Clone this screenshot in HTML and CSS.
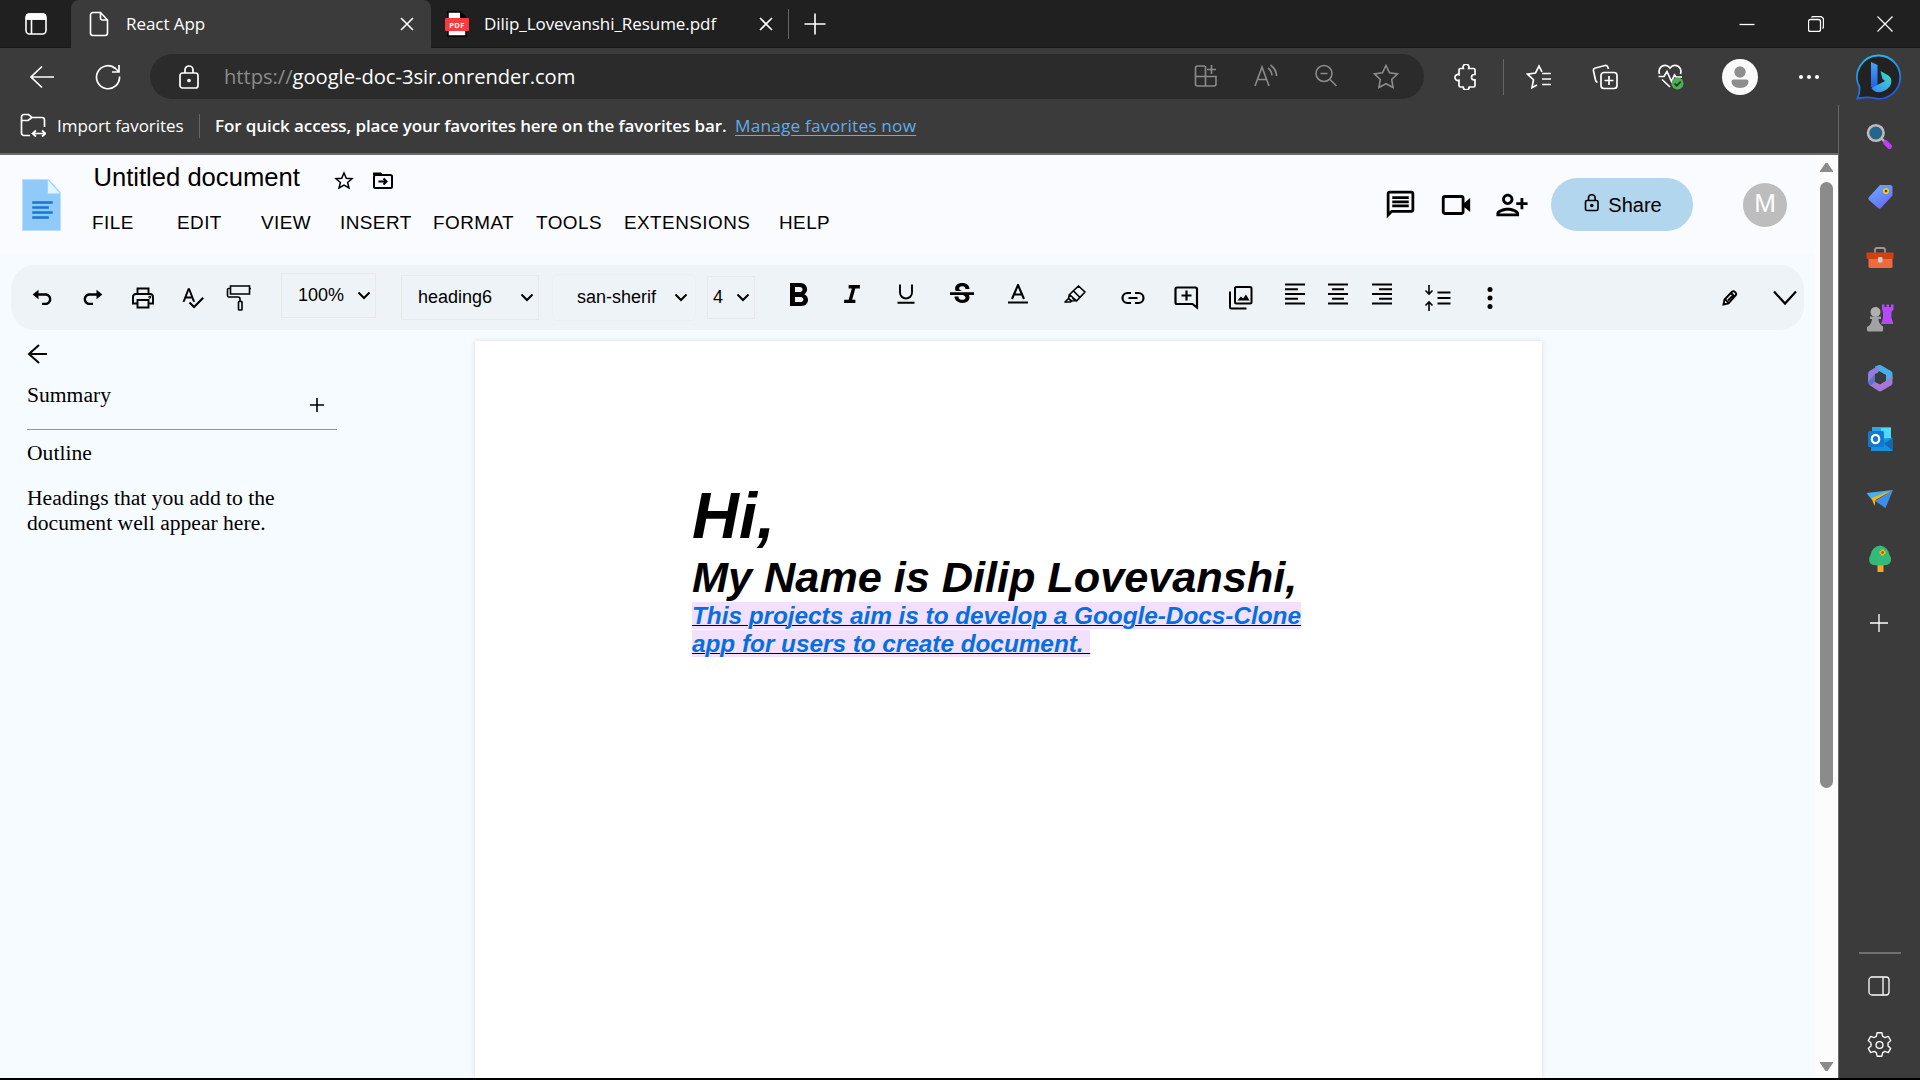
FILE: index.html
```html
<!DOCTYPE html>
<html lang="en">
<head>
<meta charset="utf-8">
<title>React App</title>
<link rel="stylesheet" href="styles.css">
</head>
<body>
<div class="window">
  <header class="tabs">
    <div class="tab-actions"><svg width="24" height="24" viewBox="0 0 24 24" class="line w15"><rect x="2" y="2" width="20" height="20" rx="3.5"/><path d="M2.5 6V5a3 3 0 0 1 3-3h13a3 3 0 0 1 3 3v2h-19zM7.5 7v15" /><path d="M3 3h18v4H3z" fill="#fff"/></svg></div>
    <div class="tab active">
      <svg width="20" height="26" viewBox="0 0 20 26" class="line w15"><path d="M4 1.5h7.5L18.5 9v13a2.5 2.5 0 0 1-2.500 2.500H4A2.500 2.500 0 0 1 1.500 22V4A2.500 2.500 0 0 1 4 1.500zM11.500 1.500V7a2 2 0 0 0 2 2h5"/></svg>
      <span>React App</span>
      <svg class="close line w15" width="14" height="14" viewBox="0 0 14 14"><path d="M1 1l12 12M13 1L1 13"/></svg>
    </div>
    <div class="tab second">
      <svg width="24" height="26" viewBox="0 0 24 26"><path d="M3 1h12l6 6v18H3z" fill="#fff" stroke="#000" stroke-width="1.500"/><path d="M15 1v6h6z" fill="#000"/><rect x="0" y="7" width="24" height="13" rx="1" fill="#f93a3e"/><text x="12" y="17" text-anchor="middle" class="pdf">PDF</text></svg>
      <span>Dilip_Lovevanshi_Resume.pdf</span>
      <svg class="close line w15" width="14" height="14" viewBox="0 0 14 14"><path d="M1 1l12 12M13 1L1 13"/></svg>
    </div>
    <div class="new-tab"><svg width="22" height="22" viewBox="0 0 22 22" class="line w15"><path d="M11 .5v21M.5 11h21"/></svg></div>
    <div class="controls">
      <div><svg width="16" height="16" viewBox="0 0 16 16" class="line w1"><path d="M.5 8.500h15"/></svg></div>
      <div><svg width="16" height="16" viewBox="0 0 16 16" class="line w1"><rect x=".5" y="3.500" width="12" height="12" rx="2"/><path d="M3.500 1.500Q4 .5 6 .5h6a3.500 3.500 0 0 1 3.500 3.500v6q0 2-1 2.500"/></svg></div>
      <div><svg width="16" height="16" viewBox="0 0 16 16" class="line w1"><path d="M.5.5l15 15M15.500.5l-15 15"/></svg></div>
    </div>
  </header>

  <nav class="nav">
    <div class="cell"><svg width="26" height="24" viewBox="0 0 26 24" class="line w16"><path d="M13 1.500L2 12l11 10.500M2 12h23"/></svg></div>
    <div class="cell"><svg width="26" height="26" viewBox="0 0 26 26" class="line w16"><path d="M24.500 12.500A11.500 11.500 0 1 1 20.500 4.500L24 8M24 1v7h-7"/></svg></div>
    <div class="address">
      <div class="lock"><svg width="20" height="24" viewBox="0 0 20 24" class="line w16"><rect x="1" y="8" width="18" height="15" rx="2.500"/><path d="M6 8V5a4 4 0 0 1 8 0v3"/><circle cx="10" cy="15.500" r="1" fill="#fff"/></svg></div>
      <div class="url"><span>https://</span>google-doc-3sir.onrender.com</div>
      <div class="tools">
        <div><svg width="24" height="24" viewBox="0 0 24 24" class="line w15"><path d="M11 2H3.500A2 2 0 0 0 1.500 4v16a2 2 0 0 0 2 2H20a2 2 0 0 0 2-2v-7.500H1.500M11.500 2v20M17.500 1v9M13 5.500h9"/></svg></div>
        <div><svg width="26" height="24" viewBox="0 0 26 24" class="line w15"><path d="M2 22L9 3l7 19M4.500 15.500h9M15 4q4 3 4 7.500M17.500 1q6 4.500 6 11"/></svg></div>
        <div><svg width="24" height="24" viewBox="0 0 24 24" class="line w15"><circle cx="10" cy="9.500" r="8"/><path d="M6.500 9.500h7M16 15.500l6.500 6.500"/></svg></div>
        <div><svg width="26" height="26" viewBox="0 0 26 26" class="line w15"><path d="M13 1.500l3.500 7.300 8 1.100-5.800 5.600 1.400 8-7.100-3.800-7.100 3.800 1.400-8-5.800-5.600 8-1.100z"/></svg></div>
      </div>
    </div>
    <div class="cell ext"><svg width="26" height="26" viewBox="0 0 26 26" class="line w16"><path d="M7.500 4.500h2.800a3 3 0 1 1 5.400 0h4.800A1.500 1.500 0 0 1 22 6v4.500h-.8a2.700 2.700 0 0 0 0 5.400h.8v5.600a1.500 1.500 0 0 1-1.500 1.500h-4.300a3 3 0 0 1-6 0H7.500A1.500 1.500 0 0 1 6 21.500v-5.200a3 3 0 1 1 0-5.600V6a1.500 1.500 0 0 1 1.500-1.500z"/></svg></div>
    <i class="bar"></i>
    <div class="cell"><svg width="26" height="26" viewBox="0 0 26 26" class="line w16"><path d="M16 7.800L13 2l-3.500 7-8 1.200 6 5.500-1.500 8 5-2.700M16 9.500h9M16 15h9M16 20.500h9M9.500 23"/></svg></div>
    <div class="cell"><svg width="26" height="26" viewBox="0 0 26 26" class="line w16"><rect x="9" y="8.500" width="16" height="16" rx="3"/><path d="M17 12v9M12.500 16.500h9M5.500 18.500Q4 18 3.500 16L1.500 7Q1 4.500 3.500 4L13 1.500q2-.3 2.800 1.500l.7 2"/></svg></div>
    <div class="cell"><svg width="28" height="28" viewBox="0 0 28 28" class="line w16"><path d="M2.500 11Q1 6 4.500 3.500 9.500.5 13 5q3.500-4.500 8.500-1.500Q25 6 23.500 11M1.500 13.500h5.500l3-5 4.500 10 3-6.500 1.500 2h6M5 16.500l8 7.500"/><circle cx="20.500" cy="20.500" r="6" fill="#4caf50" stroke="none"/><path d="M17.500 20.500l2.200 2.200 4-4" stroke="#1e3a20"/></svg></div>
    <div class="cell profile"><svg width="36" height="36" viewBox="0 0 36 36"><circle cx="18" cy="18" r="18" fill="#fafafa"/><circle cx="18" cy="13" r="5.700" fill="#8d8d8d"/><path d="M11.500 20.500h13a2 2 0 0 1 2 2q0 6.500-8.500 6.500t-8.500-6.500a2 2 0 0 1 2-2z" fill="#8d8d8d"/></svg></div>
    <div class="cell"><svg width="22" height="6" viewBox="0 0 22 6" fill="#fff"><circle cx="3" cy="3" r="2"/><circle cx="11" cy="3" r="2"/><circle cx="19" cy="3" r="2"/></svg></div>
    <div class="cell bing"><svg width="48" height="48" viewBox="0 0 48 48"><defs><linearGradient id="ring" x1="0" y1="0" x2="0.300" y2="1"><stop offset="0" stop-color="#25c4f2"/><stop offset="1" stop-color="#1f5be0"/></linearGradient><linearGradient id="stem" x1="0" y1="0" x2="0" y2="1"><stop offset="0" stop-color="#42a8f5"/><stop offset="1" stop-color="#2254e8"/></linearGradient><linearGradient id="bowl" x1="1" y1="0" x2="0" y2="1"><stop offset="0" stop-color="#35e0c8"/><stop offset="1" stop-color="#3d86f5"/></linearGradient></defs><path d="M24 2.500a21.500 21.500 0 1 1-1 43.400Q15 43 2.500 45.500 5 40 4.500 34A21.500 21.500 0 0 1 24 2.500z" fill="#222" stroke="url(#ring)" stroke-width="1.800"/><path d="M16 9l6.500 3v21L19 37l-3-3.500z" fill="url(#stem)"/><path d="M25.500 18l8 4.500q4.500 4 2 9.500Q33 37 26 39q-7 1-9.500-4L30 28l-2.500-2z" fill="url(#bowl)"/></svg></div>
  </nav>

  <div class="below">
    <div class="content">
      <div class="favorites">
        <svg width="26" height="26" viewBox="0 0 26 26" class="line w16"><path d="M10 22.500H4A2.500 2.500 0 0 1 1.500 20V4A2.500 2.500 0 0 1 4 1.500h4.500L12 4.500h10A2.500 2.500 0 0 1 24.500 7v7M1.500 7.500H8l4-3M13 20.500h12M16 17.500l-3.500 3 3.500 3M22 17.500l3.500 3-3.500 3"/></svg>
        <span class="import">Import favorites</span><i class="bar"></i><b>For quick access, place your favorites here on the favorites bar.</b><a>Manage favorites now</a>
      </div>

      <div class="viewport">
        <div class="app">
          <div class="head">
            <svg class="logo" width="39" height="52" viewBox="0 0 40 52" preserveAspectRatio="none"><path d="M.5.5h27l12 13v38H.5z" fill="#90caf9" stroke="#bbdefb"/><path d="M26.500 1v13.500H39z" fill="#e1f5fe"/><path d="M10.500 23.500h21M10.500 28.500h17M10.500 33.500h21M10.500 38.500h17" stroke="#1976d2" stroke-width="2.500"/></svg>
            <div class="titles">
              <div class="title-row"><span class="title">Untitled document</span>
                <svg class="star" width="20" height="20" viewBox="0 0 20 20"><path d="M10 2l2.300 5.300 5.700.4-4.400 3.700 1.400 5.600-5-3-5 3 1.400-5.600L2 7.700l5.700-.4z" fill="none" stroke="#000" stroke-width="1.500"/></svg>
                <svg width="22" height="20" viewBox="0 0 22 20" class="ink"><rect x="2" y="4" width="18" height="13" rx="1.500"/><path d="M2 4V2.500h6.500l2 2M6.500 10.500H14M11.500 7.500l3 3-3 3"/></svg>
              </div>
              <div class="menu"><span>FILE</span><span>EDIT</span><span>VIEW</span><span>INSERT</span><span>FORMAT</span><span>TOOLS</span><span>EXTENSIONS</span><span>HELP</span></div>
            </div>
            <div class="actions">
              <svg width="33" height="33" viewBox="0 0 24 24"><path d="M4 4h16v12H5.170L4 17.170V4m0-2c-1.100 0-1.990.9-1.990 2L2 22l4-4h14c1.100 0 2-.9 2-2V4c0-1.100-.9-2-2-2H4zm2 10h12v2H6v-2zm0-3h12v2H6V9zm0-3h12v2H6V6z"/></svg>
              <svg width="34" height="34" viewBox="0 0 24 24"><path d="M18 7c0-1.103-.897-2-2-2H4c-1.103 0-2 .897-2 2v10c0 1.103.897 2 2 2h12c1.103 0 2-.897 2-2v-3.333L22 17V7l-4 3.333V7zm-2 10H4V7h12z"/></svg>
              <svg width="34" height="34" viewBox="0 0 24 24"><path d="M13 8c0-2.210-1.790-4-4-4S5 5.790 5 8s1.790 4 4 4 4-1.790 4-4zm-2 0c0 1.100-.9 2-2 2s-2-.9-2-2 .9-2 2-2 2 .9 2 2zM1 18v2h16v-2c0-2.660-5.330-4-8-4s-8 1.340-8 4zm2 0c.2-.71 3.300-2 6-2 2.690 0 5.780 1.280 6 2H3zM20 15v-3h3v-2h-3V7h-2v3h-3v2h3v3h2z"/></svg>
              <div class="share"><svg width="16" height="20" viewBox="0 0 16 20" class="ink w15"><rect x="1.500" y="7.500" width="12.500" height="10" rx="1.500"/><path d="M4.500 7.500V5a3.300 3.300 0 0 1 6.600 0v2.500"/><circle cx="7.800" cy="12.500" r="1" fill="#000"/></svg><span>Share</span></div>
              <div class="avatar">M</div>
            </div>
          </div>

          <div class="toolbar">
            <svg width="28" height="28" viewBox="0 0 24 24"><path d="M9 10h6c1.654 0 3 1.346 3 3s-1.346 3-3 3h-3v2h3c2.757 0 5-2.243 5-5s-2.243-5-5-5H9V5L4 9l5 4v-3z"/></svg>
            <svg width="28" height="28" viewBox="0 0 24 24"><path d="M9 18h3v-2H9c-1.654 0-3-1.346-3-3s1.346-3 3-3h6v3l5-4-5-4v3H9c-2.757 0-5 2.243-5 5s2.243 5 5 5z"/></svg>
            <svg width="24" height="22" viewBox="0 0 24 22" class="ink w18"><path d="M6.500 7V1.500h11V7M6.500 16.500H2V10a3 3 0 0 1 3-3h14a3 3 0 0 1 3 3v6.500h-4.500M6.500 13h11v7.500h-11z"/><circle cx="18.800" cy="10.200" r=".5"/></svg>
            <svg width="25" height="25" viewBox="0 0 24 24"><path d="M12.450 16h2.090L9.430 3H7.570L2.460 16h2.090l1.120-3h5.640l1.140 3zm-6.020-5L8.500 5.480 10.570 11H6.430zm15.160.59l-8.090 8.090L9.830 16l-1.410 1.410 5.090 5.090L23 13l-1.410-1.410z"/></svg>
            <svg width="26" height="28" viewBox="0 0 26 28" class="ink w15"><path d="M4.500 2h19v8h-19zM23.500 4.500H25M4.500 4.500h-2a1 1 0 0 0-1 1v6a1.500 1.500 0 0 0 1.500 1.500h9a2 2 0 0 1 2 2V17"/><rect x="12.500" y="17.500" width="3.500" height="8.500" rx=".5"/></svg>
            <div class="select s1">100%<svg width="14" height="9" viewBox="0 0 14 9" class="ink"><path d="M1.500 1.500L7 7l5.500-5.500"/></svg></div>
            <div class="select s2">heading6<svg width="14" height="9" viewBox="0 0 14 9" class="ink"><path d="M1.500 1.500L7 7l5.500-5.500"/></svg></div>
            <div class="select s3">san-sherif<svg width="14" height="9" viewBox="0 0 14 9" class="ink"><path d="M1.500 1.500L7 7l5.500-5.500"/></svg></div>
            <div class="select s4">4<svg width="14" height="9" viewBox="0 0 14 9" class="ink"><path d="M1.500 1.500L7 7l5.500-5.500"/></svg></div>
            <svg class="up bold" width="18" height="23" viewBox="7 4 10.750 14" preserveAspectRatio="none"><path d="M15.600 10.790c.97-.67 1.650-1.770 1.650-2.790 0-2.260-1.750-4-4-4H7v14h7.040c2.090 0 3.710-1.700 3.710-3.790 0-1.520-.86-2.820-2.150-3.420zM10 6.500h3c.83 0 1.500.67 1.500 1.500s-.67 1.500-1.500 1.500h-3v-3zm3.500 9H10v-3h3.500c.83 0 1.500.67 1.500 1.500s-.67 1.500-1.500 1.500z"/></svg>
            <svg class="up" width="16" height="18" viewBox="5 4 14 16"><path d="M19 7V4H9v3h2.868L9.012 17H5v3h10v-3h-2.868l2.856-10z"/></svg>
            <svg class="up" width="18" height="20" viewBox="0 0 18 20"><path d="M3 .5V8.500a6 6 0 0 0 12 0V.5M.5 18.800h17" fill="none" stroke="#000" stroke-width="1.900"/></svg>
            <svg class="up strike" width="32" height="32" viewBox="0 0 24 24"><path d="M6.850 7.080C6.850 4.370 9.450 3 12.240 3c1.640 0 3 .49 3.900 1.280.77.65 1.460 1.730 1.460 3.240h-3.010c0-.31-.05-.59-.15-.85-.29-.86-1.200-1.280-2.250-1.280-1.860 0-2.340 1.020-2.340 1.700 0 .48.25.88.74 1.210.38.25.77.48 1.410.7H7.390c-.21-.34-.54-.89-.54-1.920zM21 12v-2H3v2h9.620c1.150.45 1.960.75 1.960 1.970 0 1-.81 1.670-2.280 1.670-1.540 0-2.930-.54-2.930-2.510H6.400c0 .55.08 1.130.24 1.580.81 2.290 3.290 3.300 5.670 3.300 2.270 0 5.300-.89 5.300-4.050 0-.3-.01-1.160-.48-1.940H21V12z"/></svg>
            <svg class="up" width="22" height="20" viewBox="0 0 22 20"><path d="M5 15L11 1l6 14M7.200 10.500h7.600M1 18.500h20" fill="none" stroke="#000" stroke-width="2.100"/></svg>
            <svg class="up" width="24" height="20" viewBox="0 0 24 20"><path d="M6.500 10.500L15.500 2l6.500 6-8.500 9zM10.500 7l6.500 6.500M6.500 10.500l-1 4 3 2.500 5-.5M5.500 14.500L2 18h5.500l1-1M9.500 14l2.500 2" fill="none" stroke="#000" stroke-width="1.700" stroke-linejoin="round"/></svg>
            <svg width="24" height="14" viewBox="0 0 24 14" class="ink"><path d="M10 2H6.500a5 5 0 0 0 0 10H10M14 2h3.500a5 5 0 0 1 0 10H14M7.500 7h9" stroke-width="2.200"/></svg>
            <svg width="25" height="25" viewBox="0 0 25 25" class="ink"><path d="M3 2.500h18.500q1.500 0 1.500 1.500v18.500L18.500 19H3q-1.500 0-1.500-1.500V4Q1.500 2.500 3 2.500zM12.500 5.500v10M7.500 10.500h10" stroke-width="2.200"/></svg>
            <svg width="25" height="25" viewBox="0 0 25 25" class="ink"><rect x="7" y="2" width="16.500" height="16.500" rx="1.500"/><path d="M2 6.500V22q0 1.500 1.500 1.500H18.500"/><path d="M9.500 15.500l3.500-4 2 2 3-4 3.500 6z" fill="#000" stroke="none"/></svg>
            <svg class="up" width="20" height="22" viewBox="0 0 20 22"><path d="M0 1.500h20M0 6.300h13M0 11h20M0 15.700h13M0 20.500h20" stroke="#000" stroke-width="2.100"/></svg>
            <svg class="up" width="20" height="22" viewBox="0 0 20 22"><path d="M0 1.500h20M4 6.300h12M0 11h20M4 15.700h12M0 20.500h20" stroke="#000" stroke-width="2.100"/></svg>
            <svg class="up" width="20" height="22" viewBox="0 0 20 22"><path d="M0 1.500h20M7 6.300h13M0 11h20M7 15.700h13M0 20.500h20" stroke="#000" stroke-width="2.100"/></svg>
            <svg width="28" height="28" viewBox="0 0 28 28" class="ink w15"><path d="M5 1v9M1.500 6.500L5 10l3.500-3.500M5 27v-9M1.500 21.500L5 18l3.500 3.500"/><path d="M13.500 8.500h13M13.500 14h13M13.500 19.500h13" stroke-width="2"/></svg>
            <svg width="6" height="24" viewBox="0 0 6 24"><circle cx="3" cy="3.500" r="2.500"/><circle cx="3" cy="12" r="2.500"/><circle cx="3" cy="20.500" r="2.500"/></svg>
            <svg class="pencil ink w18" width="18" height="18" viewBox="0 0 18 18"><path d="M2.500 15.500l1-5L11 2.800q1.500-1.300 2.800 0l.8.800q1.300 1.300 0 2.800L7.500 14.500zM10 4l3.500 3.500M4.500 10.500l3 3.500M7 11.500L11.500 7"/></svg>
            <svg class="expand" width="26" height="16" viewBox="0 0 26 16"><path d="M2 1.500l11 12 11-12" fill="none" stroke="#000" stroke-width="2.200"/></svg>
          </div>

          <div class="workspace">
            <aside class="outline">
              <svg width="22" height="22" viewBox="0 0 22 22" class="ink"><path d="M12 2L2 11l10 9M2 11h18"/></svg>
              <div class="summary"><span>Summary</span><svg width="14" height="14" viewBox="0 0 14 14"><path d="M7 0v14M0 7h14" stroke="#000" stroke-width="1.600"/></svg></div>
              <div class="outline-title">Outline</div>
              <p>Headings that you add to the document well appear here.</p>
            </aside>
            <main class="paper">
              <h1>Hi,</h1>
              <h2>My Name is Dilip Lovevanshi,</h2>
              <h3><u><span>This projects aim is to develop a Google-Docs-Clone app for users to create document.&nbsp;</span></u></h3>
            </main>
          </div>
        </div>
        <div class="scrollbar">
          <svg width="15" height="11" viewBox="0 0 15 11"><path d="M6.500 1h2L14 9v1H1V9z" fill="#8b8b8b"/></svg>
          <div class="thumb"></div>
          <svg class="down" width="15" height="11" viewBox="0 0 15 11"><path d="M6.500 10h2L14 2V1H1v1z" fill="#8b8b8b"/></svg>
        </div>
      </div>
    </div>

    <aside class="sidebar">
      <div><svg width="28" height="28" viewBox="0 0 28 28"><path d="M19.500 19.500l4 4" stroke="#c13df5" stroke-width="5" stroke-linecap="round"/><path d="M15.500 15.500l2.500 2.500" stroke="#aaa" stroke-width="2.500"/><circle cx="9.800" cy="10" r="7.800" fill="#25648b" stroke="#bdbab8" stroke-width="2.600"/></svg></div>
      <div><svg width="28" height="28" viewBox="0 0 28 28"><defs><linearGradient id="tag" x1="0" y1="0" x2="0.600" y2="1"><stop offset="0" stop-color="#67b0fa"/><stop offset="1" stop-color="#6a6cf8"/></linearGradient></defs><path d="M14 2h10a2.500 2.500 0 0 1 2.500 2.500v8L15 25q-1.500 1.500-3 0L3 17q-1.500-1.500 0-3z" fill="url(#tag)"/><circle cx="20" cy="8" r="2.200" fill="#444" stroke="#f7c80d" stroke-width="1.800"/></svg></div>
      <div><svg width="28" height="24" viewBox="0 0 28 24"><path d="M9 7V4q0-2 2-2h6q2 0 2 2v3" fill="none" stroke="#999" stroke-width="1.800"/><rect x="2.500" y="10" width="24" height="12" rx="1.500" fill="#f06a3f"/><rect x=".5" y="6.500" width="27" height="6.500" rx="1" fill="#cf4313"/><rect x="12" y="11" width="4.500" height="5.500" rx="1" fill="#ccc"/></svg></div>
      <div><svg width="28" height="28" viewBox="0 0 28 28"><path d="M16 .5h2.500V3h2V.5h2.500V3h2V.5h2.500v5L25.500 8v6l2 6H15l2-6V8L16 5.500z" fill="#b54bf5"/><circle cx="9.500" cy="8" r="5" fill="#b0b0b0"/><path d="M4 12.500h11v2.500h-2.500q0 5 4.500 7.500.5 5-1 5H2.500Q.5 27.500 1 23q5-3 5-8H4z" fill="#a2a2a2"/></svg></div>
      <div><svg width="28" height="28" viewBox="0 0 28 28"><path d="M9 2.500L13 1q1-.3 2 .2L25 7q1.500 1 1.500 2.500V15L20 19V11l-7-4-2 2z" fill="#48aee9"/><path d="M2 10q0-2 1.500-3L11 2.500q3 2 1 6L9 10v13L3.500 20Q2 19 2 17z" fill="#8c7fe0"/><path d="M9 9v9l5 2.500 12.500-8V19q0 1.500-1.500 2.500L15.500 27q-1.500.8-3 0L3.500 21 9 19z" fill="#a478d4"/><path d="M9 18l-5 3.500q-2-1-2-3.500l7-8z" fill="#5a72cc"/><path d="M14.300 9l4.700 2.700v5.200l-4.700 2.700-4.700-2.700v-5.200z" fill="#3b3b3b"/></svg></div>
      <div><svg width="28" height="28" viewBox="0 0 28 28"><rect x="6" y="2" width="19" height="20" fill="#28a8ea"/><rect x="15" y="3" width="10" height="10" fill="#50d9ff"/><path d="M5 18l21.500-5.500V26H5z" fill="#1490df"/><path d="M18 18.500l8.500-5v12z" fill="#1268ac"/><rect x="2" y="6" width="16" height="16" rx="1.500" fill="#0f78d4"/><ellipse cx="9.500" cy="14" rx="3.700" ry="4.200" fill="none" stroke="#fff" stroke-width="2.300"/></svg></div>
      <div><svg width="28" height="22" viewBox="0 0 28 22"><path d="M.5 5L27 2 6 12z" fill="#46b0f0"/><path d="M27 2L19.500 20 9 13z" fill="#3c8df0"/><path d="M27 2L9.500 12 8.500 18 5.500 10z" fill="#f9b60b"/></svg></div>
      <div><svg width="26" height="28" viewBox="0 0 26 28"><path d="M10.500 19h6v8h-6z" fill="#f5a623"/><path d="M13 .5q8 1 9.500 9.500 3 4 .5 8-1 2.500-10 2.500T3 18q-2-4 .5-8Q5 1.500 13 .5z" fill="#34b978"/><path d="M15.500 4.500v6M12.500 7.500h6" stroke="#f9b60b" stroke-width="3"/><circle cx="15.500" cy="7.500" r="1.400" fill="#d84315"/></svg></div>
      <div class="add"><svg width="18" height="18" viewBox="0 0 18 18" class="line w1"><path d="M9 0v18M0 9h18"/></svg></div>
      <hr>
      <div class="panel"><svg width="22" height="20" viewBox="0 0 22 20" class="line w1"><rect x="1" y="1" width="20" height="18" rx="3"/><path d="M15 1v18"/></svg></div>
      <div class="gear"><svg width="27" height="28" viewBox="0 0 26 26" class="line w1"><circle cx="13" cy="13" r="3.300"/><path d="M10.700 1.200h4.600l.8 3.500 2 1.100 3.400-1.100 2.300 4-2.600 2.400v2.800l2.600 2.400-2.300 4-3.400-1.100-2 1.100-.8 3.500h-4.600l-.8-3.500-2-1.100-3.400 1.100-2.300-4 2.600-2.400v-2.800L2.200 8.700l2.300-4 3.400 1.100 2-1.100z" stroke-linejoin="round"/></svg></div>
    </aside>
  </div>
</div>
</body>
</html>
```
FILE: styles.css
```css
* { box-sizing: border-box; }
body { margin: 0; background: #000; overflow: hidden; }
svg { display: block; flex: none; }
.window { width: 1920px; height: 1080px; padding-bottom: 2px; display: flex; flex-direction: column; font-family: "Open Sans", "Noto Sans", sans-serif; color: #fff; overflow: hidden; }

.line { fill: none; stroke: #fff; stroke-width: 1.5; }
.ink { fill: none; stroke: #000; stroke-width: 2; }
.line.w1 { stroke-width: 1.3; }
.line.w15, .ink.w15 { stroke-width: 1.6; }
.line.w16 { stroke-width: 1.7; }
.ink.w18 { stroke-width: 1.9; }

/* tab strip */
.tabs { flex: none; height: 48px; display: flex; background: #202020; box-shadow: inset 0 -1px #181818; font-size: 17px; letter-spacing: -0.06px; }
.tab-actions { width: 71px; padding-left: 1px; display: flex; align-items: center; justify-content: center; }
.tab { display: flex; align-items: center; }
.tab span { padding-bottom: 2px; }
.tab .close { margin-left: auto; }
.tab.active { width: 360px; padding: 0 17px 0 18px; gap: 17px; background: #3b3b3b; border-radius: 8px 8px 0 0; }
.tab.second { width: 358px; padding: 0 16px 0 14px; gap: 15px; background: linear-gradient(#666, #666) right center / 1px 30px no-repeat; }
.pdf { font: bold 7.500px "Open Sans", sans-serif; fill: #fff; letter-spacing: 0.3px; }
.new-tab { width: 52px; display: flex; align-items: center; justify-content: center; }
.controls { margin-left: auto; display: grid; grid-template-columns: repeat(3, 69px); }
.controls div { padding: 0 1px 1px 0; display: flex; align-items: center; justify-content: center; }

/* address row */
.nav { flex: none; height: 57px; padding-left: 9px; display: flex; align-items: center; background: #3b3b3b; }
.cell { width: 66px; display: flex; justify-content: center; }
.address { width: 1274px; height: 45px; margin-left: 9px; padding-right: 8px; display: flex; align-items: center; border-radius: 23px; background: #2b2b2b; }
.lock { width: 73px; padding-left: 5px; display: flex; justify-content: center; }
.url { padding: 0 0 1px 1px; font-size: 20.200px; letter-spacing: -0.04px; white-space: nowrap; }
.url span { color: #8b8b8b; }
.tools { margin-left: auto; display: grid; grid-template-columns: repeat(4, 60px); }
.tools div { display: flex; justify-content: center; }
.tools .line { stroke: #8b8b8b; }
.ext { width: 60px; margin-left: 12px; }
.bar { width: 1px; height: 24px; background: #666; }
.nav .bar { height: 36px; margin: 0 2px 0 7px; }
.profile { width: 72px; }
.bing { width: 74px; }

.below { flex: 1; min-height: 0; display: flex; background: #3b3b3b; }
.content { width: 1838px; display: flex; flex-direction: column; }
.favorites { flex: none; height: 50px; padding: 0 0 6px 20px; display: flex; align-items: center; border-bottom: 2px solid #6b6b6b; font-size: 17px; letter-spacing: -0.05px; white-space: nowrap; }
.favorites span, .favorites b, .favorites a { margin-bottom: 2px; }
.import { width: 153px; padding-left: 11px; }
.favorites b { width: 520px; margin-left: 15px; font-weight: 600; letter-spacing: -0.090px; }
.favorites a { color: #63ace5; font-size: 17.200px; letter-spacing: 0.22px; text-decoration: underline; text-underline-offset: 3px; }

/* page */
.viewport { flex: 1; min-height: 0; display: flex; color: #000; background: #f6fbff; }
.app { width: 1815px; display: flex; flex-direction: column; font-family: "Liberation Sans", Arial, sans-serif; }
.head { flex: none; height: 99px; display: flex; background: #fafbfe; }
.logo { margin: 24px 0 0 22px; }
.titles { margin-left: 31px; padding-top: 6px; }
.title-row { height: 34px; display: flex; align-items: center; }
.title { width: 242px; padding: 0 0 1px 1.500px; font-size: 25.600px; }
.title-row .star { margin: 5px 18px 0 0; }
.title-row .ink { margin-top: 5px; }
.menu { height: 57px; display: grid; grid-template-columns: 85px 84px 79px 93px 103px 88px 155px 60px; align-items: center; font-size: 18.900px; letter-spacing: 0.024em; }
.menu span { padding-bottom: 1px; white-space: nowrap; }
.actions { margin-left: auto; padding: 0 28px 0 0; display: flex; align-items: center; }
.actions svg { margin-right: 22px; }
.share { width: 142px; height: 53px; display: flex; align-items: center; justify-content: center; border-radius: 27px; background: #b2d6ee; font-size: 20px; }
.share span { padding-top: 2px; }
.share svg { margin: -3px 8px 0 2px; }
.avatar { width: 44px; height: 44px; margin-left: 50px; display: flex; align-items: center; justify-content: center; border-radius: 50%; background: #bdbdbd; color: #fff; font-size: 26px; padding-bottom: 2px; }

.toolbar { flex: none; width: 1793px; height: 65px; margin: 11px 0 0 11px; padding-left: 6px; display: grid; grid-template-columns: 50px 52px 48px 50px 44px 115px 163px 157px 59px 71px 52px 56px 56px 56px 58px 58px 49px 59px 50px 36px 51px 61px 44px 1fr 50px; align-items: center; justify-items: center; border-radius: 24px; background: #eef3f7; }
.toolbar .up { margin-bottom: 7px; }
.toolbar .bold { margin-left: 17px; }
.toolbar .strike { margin-bottom: 6px; }
.select { justify-self: end; display: flex; align-items: center; justify-content: space-between; border: 1px solid #e9e9ea; font-size: 18px; white-space: nowrap; }
.s1 { width: 95px; height: 45px; margin-bottom: 4px; padding: 0 4px 0 16px; }
.s2 { width: 138px; height: 45px; padding: 0 4px 0 16px; }
.s3 { width: 144px; height: 47px; padding: 0 7px 0 24px; border-color: #ebf0f3; border-radius: 5px; }
.s4 { width: 48px; height: 43px; padding: 0 4px 0 5px; }
.pencil { justify-self: end; margin-right: 15px; }
.expand { justify-self: end; margin-right: 6px; }

.workspace { flex: 1; min-height: 0; display: flex; align-items: flex-start; }
.outline { width: 475px; padding: 13px 0 0 27px; font-family: "Liberation Serif", "Times New Roman", serif; font-size: 21.600px; line-height: 25px; }
.summary { width: 310px; height: 65px; padding: 18px 13px 0 0; display: flex; justify-content: space-between; border-bottom: 1px solid #949799; }
.summary svg { margin-top: 15px; }
.outline-title { margin-top: 11px; }
.outline p { width: 270px; margin: 20px 0 0; }
.paper { width: 1067px; height: 737px; margin-top: 11px; padding: 137px 216px 0 217px; background: #fff; box-shadow: 0 0 5px rgba(0, 0, 0, 0.12); font-style: italic; }
.paper h1, .paper h2, .paper h3 { margin: 0; white-space: nowrap; }
.paper h1 { font-size: 65px; line-height: 75px; }
.paper h2 { font-size: 43.330px; line-height: 49px; letter-spacing: -0.06px; }
.paper h3 { font-size: 24.375px; line-height: 28px; letter-spacing: -0.03px; white-space: normal; }
.paper u { text-decoration: underline #000 1px; }
.paper u span { color: #066fe0; background: #f2e0fc; }

.scrollbar { width: 23px; display: flex; flex-direction: column; align-items: center; background: #fcfcfc; padding: 7px 0 6px; }
.thumb { width: 13px; height: 606px; margin-top: 9px; border-radius: 7px; background: #8b8b8b; }
.down { margin-top: auto; }

/* edge sidebar */
.sidebar { width: 82px; padding-top: 2px; display: flex; flex-direction: column; border-left: 1px solid #686868; }
.sidebar div { height: 60.300px; display: flex; align-items: center; justify-content: center; }
.sidebar .add { height: 68px; padding-right: 2px; }
.sidebar hr { width: 42px; height: 2px; margin: auto 0 0 20px; border: 0; background: #707070; }
.sidebar .panel { height: 64px; padding-right: 1px; }
.sidebar .gear { height: 54px; margin-bottom: 6px; padding-right: 1px; }
```
